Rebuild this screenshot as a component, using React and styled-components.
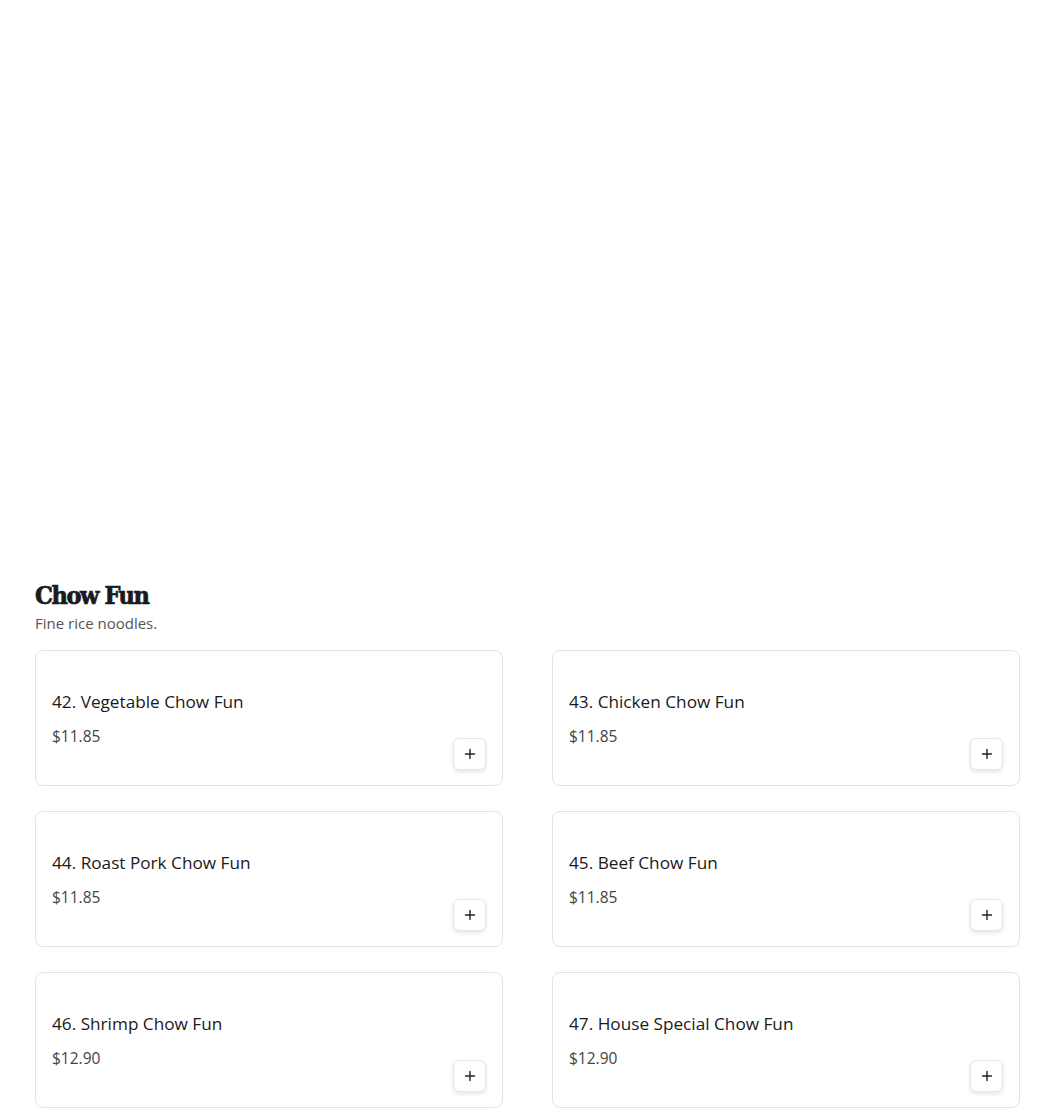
import React from "react";
import styled, { createGlobalStyle } from "styled-components";

const Global = createGlobalStyle`
  * { box-sizing: border-box; }
  html, body { margin: 0; padding: 0; background: #fff; }
  body { font-family: "Open Sans", "Noto Sans", sans-serif; color: #1a1a1a; }
`;

const Page = styled.main`
  padding: 0 30px 0 35px;
`;

const Hero = styled.div`
  height: 580px;
`;

const Section = styled.section`
  display: flex;
  flex-direction: column;
`;

const Heading = styled.h2`
  margin: 0;
  font-family: "DejaVu Serif", "Liberation Serif", serif;
  font-stretch: condensed;
  font-weight: 900;
  font-size: 25px;
  line-height: 32px;
  letter-spacing: -1.4px;
  -webkit-text-stroke: 0.7px #1a1a1a;
  color: #1a1a1a;
`;

const Subtitle = styled.p`
  margin: 1px 0 0;
  font-size: 15px;
  line-height: 20px;
  color: #555;
`;

const Grid = styled.div`
  margin-top: 17px;
  display: grid;
  grid-template-columns: 468px 468px;
  column-gap: 49px;
  row-gap: 25px;
`;

const Card = styled.article`
  height: 136px;
  border: 1px solid #e3e3e3;
  border-radius: 8px;
  padding: 39px 16px 0 16px;
  display: flex;
  flex-direction: column;
  overflow: hidden;
`;

const Title = styled.h3`
  margin: 0;
  font-size: 17.2px;
  font-weight: 500;
  line-height: 24px;
  color: #1a1a1a;
`;

const Row = styled.div`
  margin-top: 12px;
  display: flex;
  justify-content: space-between;
  align-items: flex-start;
`;

const Price = styled.div`
  font-size: 15.5px;
  line-height: 20px;
  color: #444;
`;

const AddButton = styled.button`
  margin-top: 12px;
  width: 33px;
  height: 32px;
  border: 1px solid #e6e6e6;
  border-radius: 6px;
  background: #fff;
  box-shadow: 0 2px 4px rgba(0, 0, 0, 0.1);
  display: flex;
  align-items: center;
  justify-content: center;
  padding: 0;
  cursor: pointer;
`;

const items = [
  ["42. Vegetable Chow Fun", "$11.85"],
  ["43. Chicken Chow Fun", "$11.85"],
  ["44. Roast Pork Chow Fun", "$11.85"],
  ["45. Beef Chow Fun", "$11.85"],
  ["46. Shrimp Chow Fun", "$12.90"],
  ["47. House Special Chow Fun", "$12.90"],
];

const Plus = () => (
  <svg width="12" height="12" viewBox="0 0 12 12" fill="none">
    <path d="M6 1.5v9M1.5 6h9" stroke="#222" strokeWidth="1.4" strokeLinecap="round" />
  </svg>
);

export default function App() {
  return (
    <>
      <Global />
      <Page>
        <Hero />
        <Section>
          <Heading>Chow Fun</Heading>
          <Subtitle>Fine rice noodles.</Subtitle>
          <Grid>
            {items.map(([name, price]) => (
              <Card key={name}>
                <Title>{name}</Title>
                <Row>
                  <Price>{price}</Price>
                  <AddButton aria-label="Add">
                    <Plus />
                  </AddButton>
                </Row>
              </Card>
            ))}
          </Grid>
        </Section>
      </Page>
    </>
  );
}
